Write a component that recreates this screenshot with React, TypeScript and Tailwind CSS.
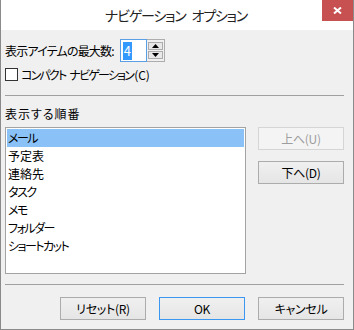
const items = [
  { label: "メール", kana: true },
  { label: "予定表", kana: false },
  { label: "連絡先", kana: false },
  { label: "タスク", kana: true },
  { label: "メモ", kana: true },
  { label: "フォルダー", kana: true },
  { label: "ショートカット", kana: true },
];

function DialogButton({
  label,
  disabled,
  primary,
}: {
  label: string;
  disabled?: boolean;
  primary?: boolean;
}) {
  const border = disabled
    ? "border-[#d5d5d5] text-[#9d9d9d] bg-[#f4f4f4]"
    : primary
      ? "border-[#3c97f0] text-black bg-gradient-to-b from-[#f0f0f0] to-[#e5e5e5]"
      : "border-[#acacac] text-black bg-gradient-to-b from-[#f0f0f0] to-[#e5e5e5]";
  return (
    <div
      className={`flex h-[23px] w-[86px] items-center justify-center border text-[12px] tracking-[-0.3px] ${border}`}
    >
      {label}
    </div>
  );
}

function SpinBox() {
  return (
    <div className="flex h-[23px]">
      <div className="flex w-[27px] items-center border border-[#5a9fe6] bg-white pl-[2px]">
        <span className="flex h-[18px] w-[9px] items-center justify-center bg-[#3399ff] text-[13px] leading-none text-white">
          4
        </span>
      </div>
      <div className="flex w-[18px] flex-col gap-[1px] border border-l-0 border-[#adadad] bg-[#f0f0f0] px-[1px] py-[2px]">
        <div className="flex flex-1 items-center justify-center border border-[#acacac] bg-[#e8e8e8]">
          <svg width="7" height="4" viewBox="0 0 7 4">
            <path d="M3.5 0 L7 4 L0 4 Z" fill="#000" />
          </svg>
        </div>
        <div className="flex flex-1 items-center justify-center border border-[#acacac] bg-[#e8e8e8]">
          <svg width="7" height="4" viewBox="0 0 7 4">
            <path d="M0 0 L7 0 L3.5 4 Z" fill="#000" />
          </svg>
        </div>
      </div>
    </div>
  );
}

export default function App() {
  return (
    <div className="h-[330px] w-[354px] border border-t-0 border-[#8a8a8a] bg-[#f0f0f0] font-['Noto_Sans_CJK_JP',sans-serif] text-black [font-feature-settings:'palt']">
      <div className="relative flex h-[30px] items-center justify-center gap-[6px] bg-white pr-[2px] text-[14px] tracking-[-1.2px] text-[#222]">
        <span>ナビゲーション</span>
        <span>オプション</span>
        <div className="absolute right-0 top-0 flex h-[21px] w-[31px] items-center justify-center bg-[#c75050]">
          <svg width="9" height="7" viewBox="0 0 9 7">
            <path d="M1 0.5 L8 6.5 M8 0.5 L1 6.5" stroke="#fff" strokeWidth="2" />
          </svg>
        </div>
      </div>

      <div className="pl-[4px] pr-[9px] text-[12px]">
        <div className="mt-[9px] flex items-center gap-[6px]">
          <span className="tracking-[-0.8px]">表示アイテムの最大数:</span>
          <SpinBox />
        </div>

        <div className="mt-[5px] flex h-[15px] items-center">
          <div className="mr-[3px] h-[13px] w-[13px] border border-[#333] bg-white" />
          <span className="tracking-[-1.8px]">コンパクト</span>
          <span className="ml-[4px] tracking-[-1.8px]">ナビゲーション</span>
          <span className="ml-[1px]">(C)</span>
        </div>

        <div className="mt-[13px] h-px bg-[#a0a0a0]" />

        <div className="mt-[10px] h-[16px] leading-[16px] tracking-[1px]">表示する順番</div>

        <div className="mt-[5px] flex gap-[12px]">
          <div className="h-[147px] w-[241px] border border-[#a3a3a3] bg-white p-[1px]">
            {items.map((item, i) => (
              <div
                key={item.label}
                className={`flex h-[18px] items-center px-[1px] ${item.kana ? "tracking-[-1.5px]" : ""} ${i === 0 ? "bg-[#8ac2f8]" : ""}`}
              >
                {item.label}
              </div>
            ))}
          </div>
          <div className="flex flex-col gap-[11px]">
            <DialogButton label="上へ(U)" disabled />
            <DialogButton label="下へ(D)" />
          </div>
        </div>

        <div className="mt-[10px] h-px bg-[#a0a0a0]" />

        <div className="mt-[12px] flex justify-end gap-[13px]">
          <DialogButton label="リセット(R)" />
          <DialogButton label="OK" primary />
          <DialogButton label="キャンセル" />
        </div>
      </div>
    </div>
  );
}
